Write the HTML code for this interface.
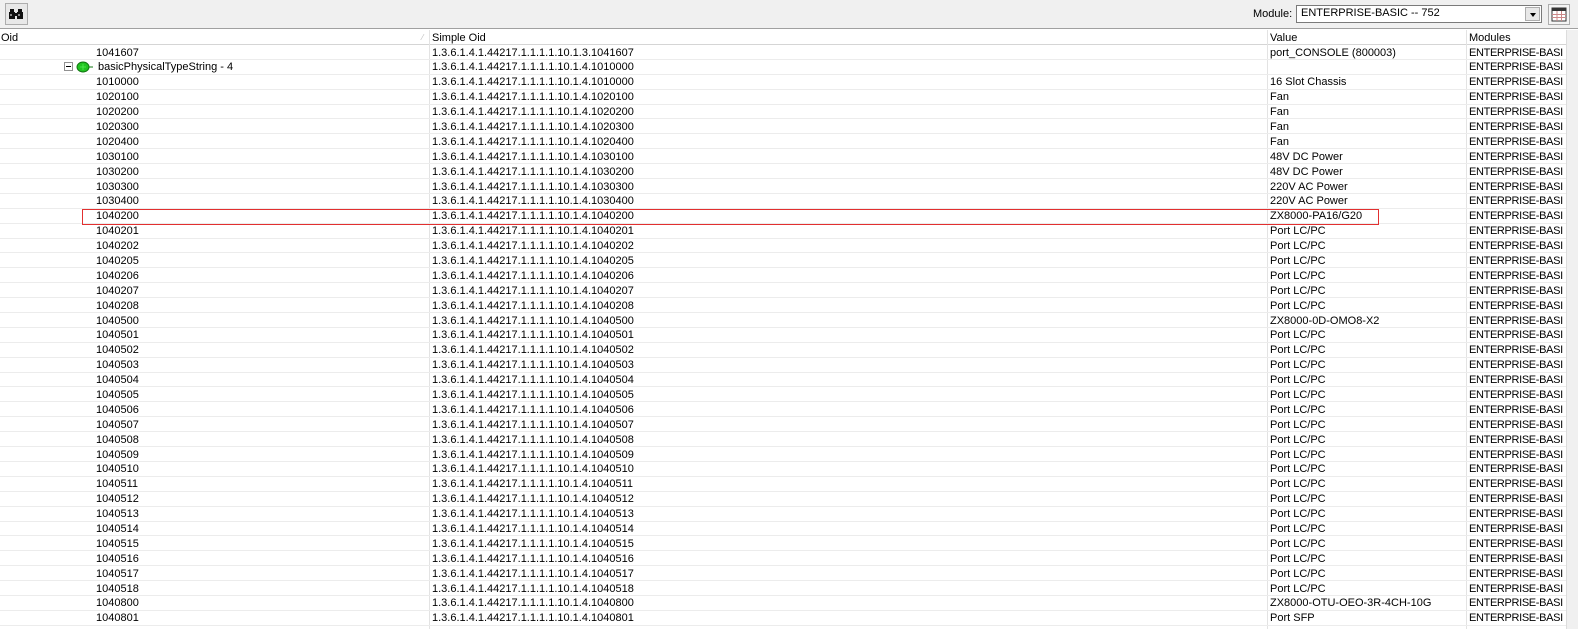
<!DOCTYPE html>
<html><head><meta charset="utf-8"><style>
*{margin:0;padding:0;box-sizing:border-box}
body{width:1578px;height:629px;overflow:hidden;background:#fff;font-family:"Liberation Sans",sans-serif;font-size:11px;color:#000;position:relative}
.tb{position:absolute;left:0;top:0;width:1578px;height:29px;background:#f0f0f0;border-bottom:1px solid #a0a0a0}
.btn{position:absolute;left:5px;top:3px;width:23px;height:22px;border:1px solid #adadad;background:#e8e8e8}
.lbl{position:absolute;left:1253px;top:8px}
.combo{position:absolute;left:1296px;top:5px;width:246px;height:18px;border:1px solid #7a7a7a;background:#fff;padding:1px 0 0 4px}
.dd{position:absolute;right:1px;top:1px;width:15px;height:14px;background:#e8e8e8;border:1px solid #adadad}
.dd:after{content:"";position:absolute;left:4px;top:5px;border-left:3px solid transparent;border-right:3px solid transparent;border-top:4px solid #000}
.gi{position:absolute;left:1548px;top:4px;width:22px;height:21px;border:1px solid #adadad;background:#f4f4f4}
.hdr{position:absolute;left:0;top:30px;width:1566px;height:15px;background:#fff;border-bottom:1px solid #d5d5d5}
.hdr span{position:absolute;top:2px}
.vl{position:absolute;top:30px;bottom:0;width:1px;background:#e3e3e3}
.rows{position:absolute;left:0;top:45px;width:1566px}
.r{position:relative;height:14.9px;border-bottom:1px solid #ececec;white-space:nowrap}
.r span{position:absolute;top:1.5px;line-height:13px}
.a{left:96px}.b{left:432px}.c{left:1270px}.d{left:1469px;letter-spacing:-0.35px}
.sb{position:absolute;left:1566px;top:30px;width:12px;height:599px;background:#f0f0f0;border-left:1px solid #ddd}
.red{position:absolute;left:82px;top:209px;width:1297px;height:16px;border:1px solid #e23030}
</style></head><body>
<div class="tb">
 <div class="btn"><svg width="21" height="20" viewBox="0 0 21 20"><g fill="#111"><rect x="4" y="5" width="4" height="3"/><rect x="12" y="5" width="4" height="3"/><rect x="3" y="8" width="6" height="7"/><rect x="11" y="8" width="6" height="7"/><rect x="8" y="9" width="4" height="3"/></g><rect x="4" y="10" width="2" height="2" fill="#888"/><rect x="12" y="10" width="2" height="2" fill="#888"/></svg></div>
 <span class="lbl">Module:</span>
 <div class="combo">ENTERPRISE-BASIC -- 752<div class="dd"></div></div>
 <div class="gi"><svg width="20" height="19" viewBox="0 0 20 19"><rect x="3" y="3" width="14" height="13" fill="#fff" stroke="#333"/><rect x="3" y="3" width="14" height="3" fill="#333"/><path d="M3 9.5h14M3 12.5h14M8 6v10M12.5 6v10" stroke="#c88" stroke-width="1"/></svg></div>
</div>
<div class="hdr"><span style="left:1px">Oid</span><span style="left:422px;color:#bbb;font-size:8px;top:3px">⁄</span><span style="left:432px">Simple Oid</span><span style="left:1270px">Value</span><span style="left:1469px">Modules</span></div>
<div class="vl" style="left:429px"></div><div class="vl" style="left:1267px"></div><div class="vl" style="left:1466px"></div>
<div class="rows">
<div class="r"><span class="a">1041607</span><span class="b">1.3.6.1.4.1.44217.1.1.1.1.10.1.3.1041607</span><span class="c">port_CONSOLE (800003)</span><span class="d">ENTERPRISE-BASI</span></div>
<div class="r"><span style="left:64px;top:2px;width:9px;height:9px;border:1px solid #919191;background:#fff"></span><span style="left:66px;top:6px;width:5px;height:1px;background:#000"></span><span style="left:76px;top:1px"><svg width="18" height="12"><ellipse cx="7" cy="6" rx="6" ry="5" fill="#22c322" stroke="#117711"/><path d="M13 6h4" stroke="#117711"/><path d="M4 6h6M7 3v6" stroke="#5e5" stroke-width=".8"/></svg></span><span style="left:98px">basicPhysicalTypeString - 4</span><span class="b">1.3.6.1.4.1.44217.1.1.1.1.10.1.4.1010000</span><span class="d">ENTERPRISE-BASI</span></div>
<div class="r"><span class="a">1010000</span><span class="b">1.3.6.1.4.1.44217.1.1.1.1.10.1.4.1010000</span><span class="c">16 Slot Chassis</span><span class="d">ENTERPRISE-BASI</span></div>
<div class="r"><span class="a">1020100</span><span class="b">1.3.6.1.4.1.44217.1.1.1.1.10.1.4.1020100</span><span class="c">Fan</span><span class="d">ENTERPRISE-BASI</span></div>
<div class="r"><span class="a">1020200</span><span class="b">1.3.6.1.4.1.44217.1.1.1.1.10.1.4.1020200</span><span class="c">Fan</span><span class="d">ENTERPRISE-BASI</span></div>
<div class="r"><span class="a">1020300</span><span class="b">1.3.6.1.4.1.44217.1.1.1.1.10.1.4.1020300</span><span class="c">Fan</span><span class="d">ENTERPRISE-BASI</span></div>
<div class="r"><span class="a">1020400</span><span class="b">1.3.6.1.4.1.44217.1.1.1.1.10.1.4.1020400</span><span class="c">Fan</span><span class="d">ENTERPRISE-BASI</span></div>
<div class="r"><span class="a">1030100</span><span class="b">1.3.6.1.4.1.44217.1.1.1.1.10.1.4.1030100</span><span class="c">48V DC Power</span><span class="d">ENTERPRISE-BASI</span></div>
<div class="r"><span class="a">1030200</span><span class="b">1.3.6.1.4.1.44217.1.1.1.1.10.1.4.1030200</span><span class="c">48V DC Power</span><span class="d">ENTERPRISE-BASI</span></div>
<div class="r"><span class="a">1030300</span><span class="b">1.3.6.1.4.1.44217.1.1.1.1.10.1.4.1030300</span><span class="c">220V AC Power</span><span class="d">ENTERPRISE-BASI</span></div>
<div class="r"><span class="a">1030400</span><span class="b">1.3.6.1.4.1.44217.1.1.1.1.10.1.4.1030400</span><span class="c">220V AC Power</span><span class="d">ENTERPRISE-BASI</span></div>
<div class="r"><span class="a">1040200</span><span class="b">1.3.6.1.4.1.44217.1.1.1.1.10.1.4.1040200</span><span class="c">ZX8000-PA16/G20</span><span class="d">ENTERPRISE-BASI</span></div>
<div class="r"><span class="a">1040201</span><span class="b">1.3.6.1.4.1.44217.1.1.1.1.10.1.4.1040201</span><span class="c">Port LC/PC</span><span class="d">ENTERPRISE-BASI</span></div>
<div class="r"><span class="a">1040202</span><span class="b">1.3.6.1.4.1.44217.1.1.1.1.10.1.4.1040202</span><span class="c">Port LC/PC</span><span class="d">ENTERPRISE-BASI</span></div>
<div class="r"><span class="a">1040205</span><span class="b">1.3.6.1.4.1.44217.1.1.1.1.10.1.4.1040205</span><span class="c">Port LC/PC</span><span class="d">ENTERPRISE-BASI</span></div>
<div class="r"><span class="a">1040206</span><span class="b">1.3.6.1.4.1.44217.1.1.1.1.10.1.4.1040206</span><span class="c">Port LC/PC</span><span class="d">ENTERPRISE-BASI</span></div>
<div class="r"><span class="a">1040207</span><span class="b">1.3.6.1.4.1.44217.1.1.1.1.10.1.4.1040207</span><span class="c">Port LC/PC</span><span class="d">ENTERPRISE-BASI</span></div>
<div class="r"><span class="a">1040208</span><span class="b">1.3.6.1.4.1.44217.1.1.1.1.10.1.4.1040208</span><span class="c">Port LC/PC</span><span class="d">ENTERPRISE-BASI</span></div>
<div class="r"><span class="a">1040500</span><span class="b">1.3.6.1.4.1.44217.1.1.1.1.10.1.4.1040500</span><span class="c">ZX8000-0D-OMO8-X2</span><span class="d">ENTERPRISE-BASI</span></div>
<div class="r"><span class="a">1040501</span><span class="b">1.3.6.1.4.1.44217.1.1.1.1.10.1.4.1040501</span><span class="c">Port LC/PC</span><span class="d">ENTERPRISE-BASI</span></div>
<div class="r"><span class="a">1040502</span><span class="b">1.3.6.1.4.1.44217.1.1.1.1.10.1.4.1040502</span><span class="c">Port LC/PC</span><span class="d">ENTERPRISE-BASI</span></div>
<div class="r"><span class="a">1040503</span><span class="b">1.3.6.1.4.1.44217.1.1.1.1.10.1.4.1040503</span><span class="c">Port LC/PC</span><span class="d">ENTERPRISE-BASI</span></div>
<div class="r"><span class="a">1040504</span><span class="b">1.3.6.1.4.1.44217.1.1.1.1.10.1.4.1040504</span><span class="c">Port LC/PC</span><span class="d">ENTERPRISE-BASI</span></div>
<div class="r"><span class="a">1040505</span><span class="b">1.3.6.1.4.1.44217.1.1.1.1.10.1.4.1040505</span><span class="c">Port LC/PC</span><span class="d">ENTERPRISE-BASI</span></div>
<div class="r"><span class="a">1040506</span><span class="b">1.3.6.1.4.1.44217.1.1.1.1.10.1.4.1040506</span><span class="c">Port LC/PC</span><span class="d">ENTERPRISE-BASI</span></div>
<div class="r"><span class="a">1040507</span><span class="b">1.3.6.1.4.1.44217.1.1.1.1.10.1.4.1040507</span><span class="c">Port LC/PC</span><span class="d">ENTERPRISE-BASI</span></div>
<div class="r"><span class="a">1040508</span><span class="b">1.3.6.1.4.1.44217.1.1.1.1.10.1.4.1040508</span><span class="c">Port LC/PC</span><span class="d">ENTERPRISE-BASI</span></div>
<div class="r"><span class="a">1040509</span><span class="b">1.3.6.1.4.1.44217.1.1.1.1.10.1.4.1040509</span><span class="c">Port LC/PC</span><span class="d">ENTERPRISE-BASI</span></div>
<div class="r"><span class="a">1040510</span><span class="b">1.3.6.1.4.1.44217.1.1.1.1.10.1.4.1040510</span><span class="c">Port LC/PC</span><span class="d">ENTERPRISE-BASI</span></div>
<div class="r"><span class="a">1040511</span><span class="b">1.3.6.1.4.1.44217.1.1.1.1.10.1.4.1040511</span><span class="c">Port LC/PC</span><span class="d">ENTERPRISE-BASI</span></div>
<div class="r"><span class="a">1040512</span><span class="b">1.3.6.1.4.1.44217.1.1.1.1.10.1.4.1040512</span><span class="c">Port LC/PC</span><span class="d">ENTERPRISE-BASI</span></div>
<div class="r"><span class="a">1040513</span><span class="b">1.3.6.1.4.1.44217.1.1.1.1.10.1.4.1040513</span><span class="c">Port LC/PC</span><span class="d">ENTERPRISE-BASI</span></div>
<div class="r"><span class="a">1040514</span><span class="b">1.3.6.1.4.1.44217.1.1.1.1.10.1.4.1040514</span><span class="c">Port LC/PC</span><span class="d">ENTERPRISE-BASI</span></div>
<div class="r"><span class="a">1040515</span><span class="b">1.3.6.1.4.1.44217.1.1.1.1.10.1.4.1040515</span><span class="c">Port LC/PC</span><span class="d">ENTERPRISE-BASI</span></div>
<div class="r"><span class="a">1040516</span><span class="b">1.3.6.1.4.1.44217.1.1.1.1.10.1.4.1040516</span><span class="c">Port LC/PC</span><span class="d">ENTERPRISE-BASI</span></div>
<div class="r"><span class="a">1040517</span><span class="b">1.3.6.1.4.1.44217.1.1.1.1.10.1.4.1040517</span><span class="c">Port LC/PC</span><span class="d">ENTERPRISE-BASI</span></div>
<div class="r"><span class="a">1040518</span><span class="b">1.3.6.1.4.1.44217.1.1.1.1.10.1.4.1040518</span><span class="c">Port LC/PC</span><span class="d">ENTERPRISE-BASI</span></div>
<div class="r"><span class="a">1040800</span><span class="b">1.3.6.1.4.1.44217.1.1.1.1.10.1.4.1040800</span><span class="c">ZX8000-OTU-OEO-3R-4CH-10G</span><span class="d">ENTERPRISE-BASI</span></div>
<div class="r"><span class="a">1040801</span><span class="b">1.3.6.1.4.1.44217.1.1.1.1.10.1.4.1040801</span><span class="c">Port SFP</span><span class="d">ENTERPRISE-BASI</span></div>
</div>
<div class="sb"></div>
<div class="red"></div>
</body></html>
